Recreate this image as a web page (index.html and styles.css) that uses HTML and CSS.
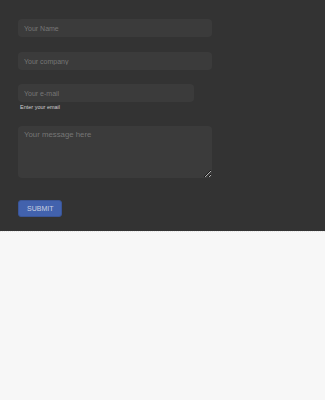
FILE: index.html
```
<!DOCTYPE html>
<html lang="en">

<head>
   <meta charset="UTF-8">
   <meta name="viewport" content="width=device-width, initial-scale=1.0">
   <title>Contact</title>
   <link rel="stylesheet" href="styles.css">
</head>

<body>
   <section class="contact">
      <form class="contact-form">
         <input type="text" class="field field-name" placeholder="Your Name">
         <input type="text" class="field field-company" placeholder="Your company">
         <input type="email" class="field field-email" placeholder="Your e-mail">
         <p class="hint">Enter your email</p>
         <textarea class="field field-message" placeholder="Your message here"></textarea>
         <button type="submit" class="submit">SUBMIT</button>
      </form>
   </section>
   <div class="below"></div>
</body>

</html>
```
FILE: styles.css
```
html,
body {
   margin: 0;
   padding: 0;
   background-color: #f7f7f7;
   font-family: 'Liberation Sans', Arial, sans-serif;
}

.contact {
   background-color: #333333;
   padding: 19px 18px 14px;
}

.contact-form {
   display: flex;
   flex-direction: column;
   align-items: flex-start;
   width: 194px;
   margin: 0;
}

.field {
   box-sizing: border-box;
   width: 194px;
   height: 18px;
   margin: 0;
   padding: 0 6px;
   border: none;
   border-radius: 4px;
   background-color: #3b3b3b;
   color: #aaaaaa;
   font-family: 'Liberation Sans', Arial, sans-serif;
   font-size: 7px;
   outline: none;
}

.field::placeholder {
   color: #767676;
}

.field-name {
   margin-bottom: 15px;
}

.field-company {
   margin-bottom: 14px;
}

.field-email {
   width: 176px;
}

.hint {
   margin: 2px 0 0 2px;
   height: 6px;
   line-height: 6px;
   font-size: 5.5px;
   color: #cfcfcf;
}

.field-message {
   height: 52px;
   margin-top: 16px;
   padding: 4px 6px;
   font-size: 7.8px;
   resize: vertical;
}

.submit {
   box-sizing: border-box;
   margin-top: 22px;
   height: 17px;
   padding: 0 8px;
   border: 1px solid #3a5597;
   border-radius: 3px;
   background-color: #4262ad;
   color: #c9cfe0;
   font-family: 'Liberation Sans', Arial, sans-serif;
   font-size: 7px;
}

.below {
   border-top: 1px dotted #e4e4e4;
   height: 167px;
}
```
